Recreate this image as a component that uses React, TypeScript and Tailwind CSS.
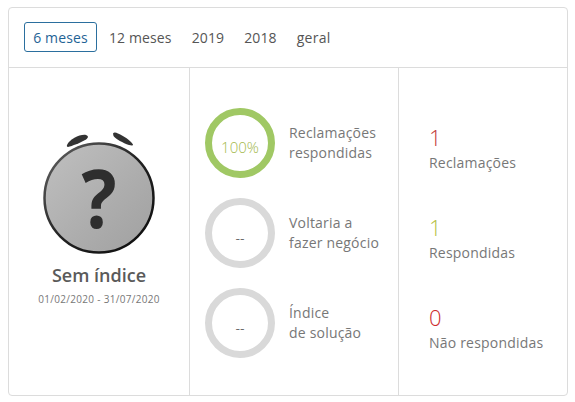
const tabs = ["12 meses", "2019", "2018"];

const rings = [
  { value: "100%", label: ["Reclamações", "respondidas"], active: true },
  { value: "--", label: ["Voltaria a", "fazer negócio"], active: false },
  { value: "--", label: ["Índice", "de solução"], active: false },
];

const stats = [
  { value: "1", label: "Reclamações", color: "text-[#bf3a3a]" },
  { value: "1", label: "Respondidas", color: "text-[#b4bf45]" },
  { value: "0", label: "Não respondidas", color: "text-[#cc2a2a]" },
];

function NoIndexIcon() {
  return (
    <svg width="114" height="124" viewBox="0 0 114 124" className="block">
      <defs>
        <linearGradient id="face" x1="0" y1="0" x2="1" y2="1">
          <stop offset="0" stopColor="#c0c0c0" />
          <stop offset="0.6" stopColor="#acacac" />
          <stop offset="1" stopColor="#a0a0a0" />
        </linearGradient>
        <linearGradient id="rim" x1="0" y1="0" x2="1" y2="1">
          <stop offset="0" stopColor="#666" />
          <stop offset="0.5" stopColor="#222" />
          <stop offset="1" stopColor="#0c0c0c" />
        </linearGradient>
      </defs>
      <path d="M25 15C28 9 38 4 44 5C47 6 46 8 44 9.5C38 13 30 16 26 17C25 17 24.6 16 25 15Z" fill="#333" />
      <path d="M71 3.5C72 2 74 2.5 76 3.5C82 6 88 10 91 14.5C91 16 89 15.5 87 15C81 13 74 9 71.5 6Z" fill="#333" />
      <circle cx="57" cy="68" r="54.5" fill="url(#face)" stroke="url(#rim)" strokeWidth="2.5" />
      <text
        x="0"
        y="98"
        transform="translate(57 0) scale(0.92 1)"
        textAnchor="middle"
        fill="#2e2e2e"
        fontSize="80"
        fontWeight="700"
        fontFamily="'Open Sans', sans-serif"
      >
        ?
      </text>
    </svg>
  );
}

function Ring({ value, active }: { value: string; active: boolean }) {
  return (
    <div
      className={`flex h-[70px] w-[70px] shrink-0 items-center justify-center rounded-full border-[7px] ${
        active ? "border-[#a0c864]" : "border-[#d9d9d9]"
      }`}
    >
      <span className={`pt-[8px] font-light ${active ? "text-[15px] text-[#a3b94c]" : "text-[14px] text-[#333]"}`}>{value}</span>
    </div>
  );
}

export default function App() {
  return (
    <div className="h-[402px] w-[575px] bg-white pl-2 pr-[7px] pt-[7px] font-['Open_Sans',sans-serif]">
      <div className="flex h-[389px] w-[560px] flex-col rounded-[4px] border border-[#dcdcdc]">
        <div className="flex h-[60px] items-center gap-[4px] border-b border-[#dcdcdc] pb-[1px] pl-[15px] text-[14px] tracking-[0.12px] text-[#555]">
          <button className="h-[30px] w-[73px] rounded-[3px] border border-[#2b6f9e] text-[#1f6396]">6 meses</button>
          {tabs.map((t) => (
            <button key={t} className="px-[8px]">
              {t}
            </button>
          ))}
          <button className="px-[8px] font-medium tracking-[0.3px]">geral</button>
        </div>
        <div className="flex min-h-0 flex-1">
          <div className="flex w-[181px] flex-col items-center border-r border-[#dcdcdc] pt-[62px]">
            <div className="ml-[-1px]">
              <NoIndexIcon />
            </div>
            <div className="mt-[9px] text-[18px] font-semibold leading-[24px] text-[#5a5a5a]">Sem índice</div>
            <div className="mt-[5px] text-[10px] leading-[14px] tracking-[0.3px] text-[#777]">01/02/2020 - 31/07/2020</div>
          </div>
          <div className="flex w-[209px] flex-col gap-[20px] border-r border-[#dcdcdc] pl-[15px] pt-[40px]">
            {rings.map((r) => (
              <div key={r.label[0]} className="flex items-center gap-[14px]">
                <Ring value={r.value} active={r.active} />
                <div className="text-[14px] leading-[20px] tracking-[0.2px] text-[#777]">
                  <div>{r.label[0]}</div>
                  <div>{r.label[1]}</div>
                </div>
              </div>
            ))}
          </div>
          <div className="flex flex-1 flex-col gap-[34px] pl-[30px] pt-[54px]">
            {stats.map((s) => (
              <div key={s.label} className="h-[56px]">
                <div className={`text-[22px] font-light leading-[30px] ${s.color}`}>{s.value}</div>
                <div className="pt-[1px] text-[14px] leading-[20px] tracking-[0.2px] text-[#777]">{s.label}</div>
              </div>
            ))}
          </div>
        </div>
      </div>
    </div>
  );
}
